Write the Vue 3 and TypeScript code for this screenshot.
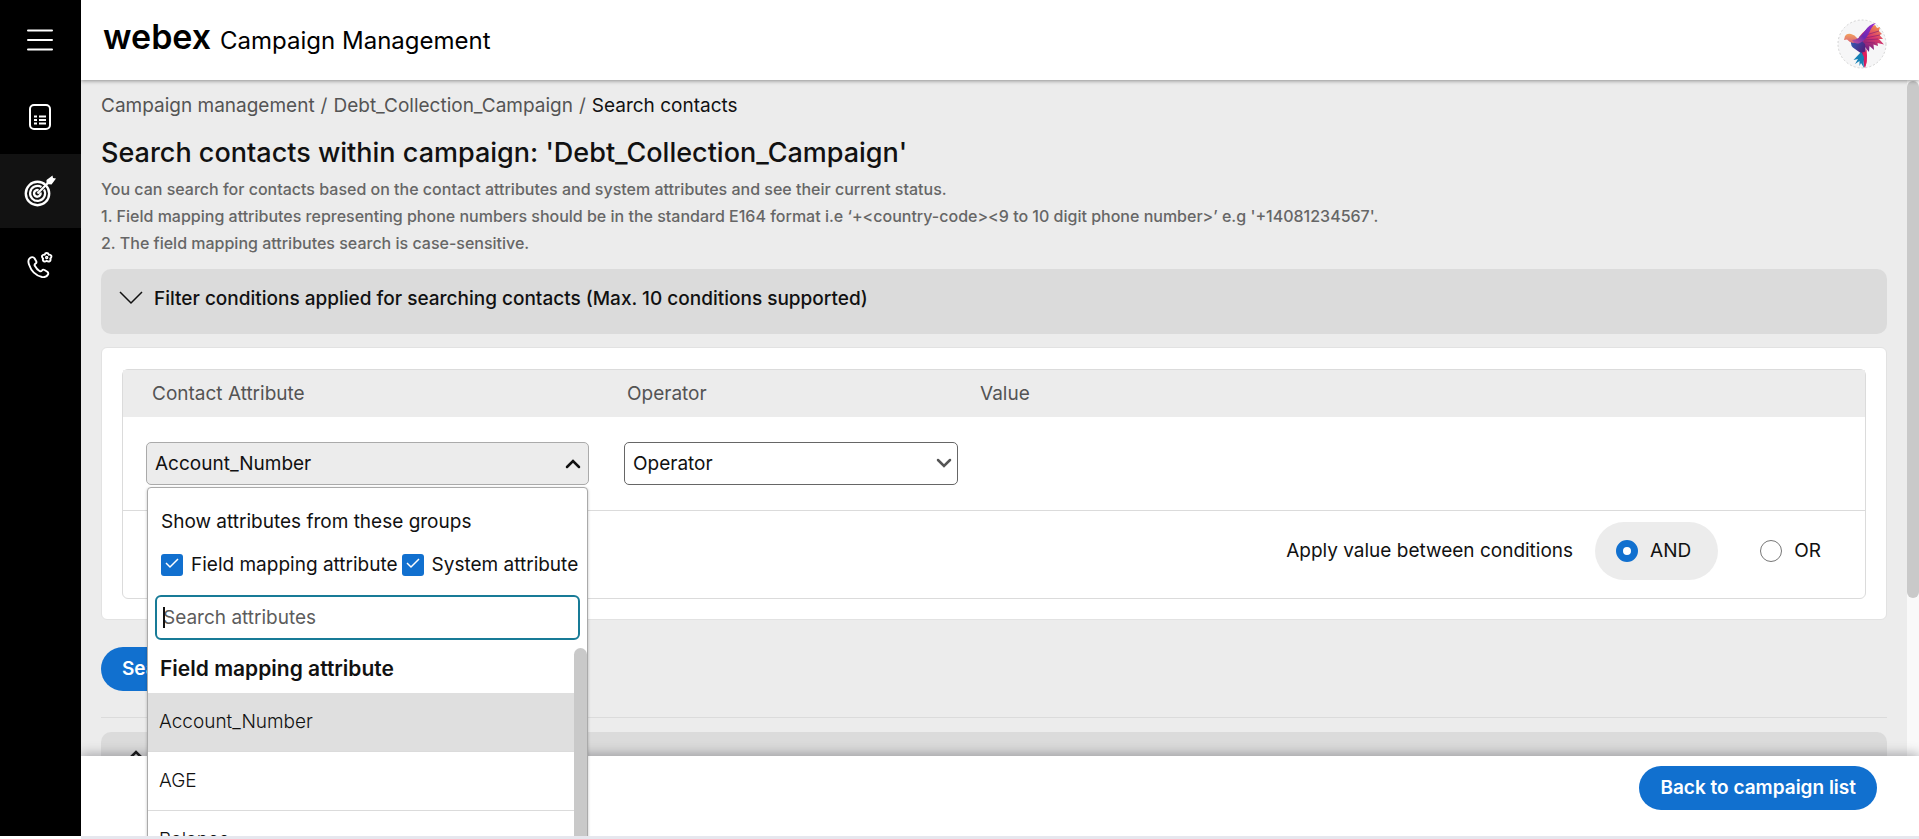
<script setup lang="ts">
import { ref, onMounted } from 'vue'

const fieldGroup = ref(true)
const systemGroup = ref(true)
const joiner = ref('AND')
const query = ref('')
const attributes = ['Account_Number', 'AGE', 'Balance']
const notes = [
  'You can search for contacts based on the contact attributes and system attributes and see their current status.',
  "1. Field mapping attributes representing phone numbers should be in the standard E164 format i.e ‘+<country-code><9 to 10 digit phone number>’ e.g '+14081234567'.",
  '2. The field mapping attributes search is case-sensitive.',
]
const searchBox = ref<HTMLInputElement | null>(null)
onMounted(() => searchBox.value?.focus())
</script>

<template>
  <div class="app">
    <nav class="rail" aria-label="Main">
      <button class="rail-item menu" aria-label="Menu">
        <svg width="26" height="22" viewBox="0 0 26 22"><path d="M1 1.5h24M1 11h24M1 20.5h24" stroke="#fff" stroke-width="2" stroke-linecap="round" /></svg>
      </button>
      <button class="rail-item" aria-label="Records">
        <svg width="24" height="26" viewBox="0 0 24 26" fill="none" stroke="#fff"><rect x="2" y="1" width="20" height="24" rx="4" stroke-width="2" /><path d="M6 12.5h3M11 12.5h7M6 16h3M11 16h7M6 19.500h3M11 19.500h7" stroke-width="1.800" /></svg>
      </button>
      <button class="rail-item active" aria-label="Campaigns">
        <svg width="32" height="32" viewBox="0 0 32 32" fill="none" stroke="#fff"><circle cx="13.500" cy="18.500" r="11.700" stroke-width="2.400" /><path d="M20 14.500a7.500 7.500 0 1 1-2.500-2.500" stroke-width="2.200" /><path d="M16.500 17.500a3.300 3.300 0 1 1-2-2.200" stroke-width="2.400" /><path d="M13.500 18.500L26 6" stroke-width="2.200" /><path d="M22.500 9V5L28.500 0.500L29 3L32 3.500L27.500 9.500Z" fill="#fff" stroke="none" /></svg>
      </button>
      <button class="rail-item" aria-label="Calls">
        <svg width="26" height="26" viewBox="0 0 26 26" fill="none" stroke="#fff" stroke-width="1.900" stroke-linejoin="round"><path d="M3 6C1.500 7 1 9.500 2 12.500C4 18.500 8.500 23.500 15 25C18 25.500 20 24.500 21 22.500C21.500 21.500 21.200 20.500 20.300 19.800L17.500 18C16.500 17.400 15.500 17.700 15 18.500C14.200 19.600 13.500 19.600 12.500 19C10.500 17.800 9 16 7.800 13.800C7.300 12.800 7.500 12.200 8.500 11.600C9.500 11 9.700 10.200 9.200 9.200L7.500 6.200C6.500 4.800 4.500 4.800 3 6Z" /><path d="M19.700 1Q21.300 1 21.700 2.700Q23.500 2.300 24.300 3.800Q24.800 5.400 23.300 6.500Q24 8.200 22.800 9.200Q21.300 10.100 19.700 8.800Q18.100 10.100 16.600 9.200Q15.400 8.200 16.100 6.500Q14.600 5.400 15.100 3.800Q15.900 2.300 17.700 2.700Q18.100 1 19.700 1Z" /><circle cx="19.700" cy="5.500" r="1" stroke-width="1.500" /></svg>
      </button>
    </nav>

    <div class="main">
      <header class="topbar">
        <div class="brand"><span class="webex">webex</span><span class="product">Campaign Management</span></div>
        <svg class="avatar" width="50" height="50" viewBox="0 0 50 50" role="img" aria-label="User profile">
          <defs>
            <linearGradient id="head" x1="0" y1="0" x2="0" y2="1"><stop offset="0" stop-color="#f2a25c" /><stop offset="1" stop-color="#d9627a" /></linearGradient>
            <linearGradient id="feathers" x1="0.800" y1="0" x2="0.300" y2="1"><stop offset="0" stop-color="#f59a4a" /><stop offset=".45" stop-color="#d9386b" /><stop offset="1" stop-color="#5a1a8c" /></linearGradient>
            <linearGradient id="wing" x1="1" y1="0" x2="0" y2="1"><stop offset="0" stop-color="#a12bd0" /><stop offset=".6" stop-color="#6a2bb0" /><stop offset="1" stop-color="#c4559a" /></linearGradient>
            <linearGradient id="belly" x1="0" y1="0" x2="1" y2="1"><stop offset="0" stop-color="#2b62b8" /><stop offset=".6" stop-color="#51207e" /><stop offset="1" stop-color="#e01e5c" /></linearGradient>
          </defs>
          <circle cx="25" cy="25" r="24" fill="#f6f6f7" stroke="#d4d4d4" stroke-dasharray="2 2" />
          <path d="M22 18Q30 8 38 6L40 9L43 8L42 12L45 15L42.500 16L46 20L42 20L47 25.500L40.500 24L41 27L36.500 25.500L37 31L32.500 27L32 33L28 28L26 32L20 27Z" fill="url(#feathers)" />
          <path d="M29 16L42 12M28 19L43 16M27 21L41 20M27 23L38 24" stroke="#8b1f73" stroke-width=".7" />
          <path d="M14 22L23 20L28 25L29 34Q31 42 27.500 49L25 35L18 30Q13 27 14 22Z" fill="url(#belly)" />
          <path d="M25.500 33Q29 34 29.500 29L30 37Q30 44 28 49Q28 42 25.500 36Z" fill="#e01e5c" />
          <path d="M24 33L27 38Q26 43 27 49L24 44L22.500 47L22.500 42L18 45L21 40L16.500 41Z" fill="#1681b6" />
          <path d="M7 21L8 17Q10 14 14 15Q18 16 20 19L22 22L16 24Q12 23 10 20.500Z" fill="url(#head)" />
          <path d="M15 21Q22 21 27 13Q32 5 39 4Q35 7 32.500 13Q29 21 23 24Q18 26 15 21Z" fill="url(#wing)" />
        </svg>
      </header>

      <main class="content">
        <nav class="crumbs" aria-label="Breadcrumb">
          <a href="#">Campaign management</a><span>/</span><a href="#">Debt_Collection_Campaign</a><span>/</span><a href="#" class="current">Search contacts</a>
        </nav>
        <h1>Search contacts within campaign: 'Debt_Collection_Campaign'</h1>
        <p v-for="note in notes" :key="note" class="note">{{ note }}</p>

        <button class="fold">
          <svg width="24" height="14" viewBox="0 0 24 14"><path d="M1 1L12 12L23 1" fill="none" stroke="#111" stroke-width="1.500" /></svg>
          Filter conditions applied for searching contacts (Max. 10 conditions supported)
        </button>

        <section class="card">
          <div class="grid">
            <div class="row head"><span>Contact Attribute</span><span>Operator</span><span>Value</span></div>
            <div class="row body">
              <div class="picker">
                <button class="combo" aria-haspopup="listbox" aria-expanded="true">
                  Account_Number
                  <svg width="16" height="10" viewBox="0 0 16 10"><path d="M2 8L8 2L14 8" fill="none" stroke="#111" stroke-width="2.500" stroke-linecap="round" /></svg>
                </button>
                <div class="popup">
                  <div class="popup-title">Show attributes from these groups</div>
                  <div class="groups">
                    <label><input v-model="fieldGroup" type="checkbox" />Field mapping attribute</label>
                    <label><input v-model="systemGroup" type="checkbox" />System attribute</label>
                  </div>
                  <div class="search-wrap">
                    <input ref="searchBox" v-model="query" class="search" type="text" placeholder="Search attributes" aria-label="Search attributes" />
                    <span v-if="!query" class="caret" aria-hidden="true"></span>
                  </div>
                  <div class="scroller">
                    <div class="list" role="listbox" aria-label="Attributes">
                      <div class="group-name">Field mapping attribute</div>
                      <div v-for="(name, i) in attributes" :key="name" class="option" :class="{ chosen: i === 0 }" role="option" :aria-selected="i === 0">{{ name }}</div>
                    </div>
                    <div class="thumb"></div>
                  </div>
                </div>
              </div>
              <div class="select-wrap">
                <select aria-label="Operator"><option>Operator</option></select>
                <svg width="16" height="10" viewBox="0 0 16 10"><path d="M2 2L8 8L14 2" fill="none" stroke="#555" stroke-width="2.500" stroke-linecap="round" /></svg>
              </div>
            </div>
            <div class="joiner">
              <span class="joiner-text">Apply value between conditions</span>
              <label :class="{ on: joiner === 'AND' }"><input v-model="joiner" type="radio" name="joiner" value="AND" />AND</label>
              <label :class="{ on: joiner === 'OR' }"><input v-model="joiner" type="radio" name="joiner" value="OR" />OR</label>
            </div>
          </div>
        </section>

        <button class="pill search-button">Search</button>
        <hr />
        <button class="fold next" aria-label="Expand results">
          <svg width="16" height="10" viewBox="0 0 16 10"><path d="M2 8L8 2L14 8" fill="none" stroke="#111" stroke-width="2.500" /></svg>
        </button>
        <div class="page-track"><div class="page-thumb"></div></div>
      </main>

      <footer><button class="pill">Back to campaign list</button></footer>
    </div>
  </div>
</template>

<style>
body { background: #fff; }
</style>

<style scoped>
* { box-sizing: border-box; }
.app { display: flex; height: 100vh; overflow: hidden; font-family: Inter, "Liberation Sans", sans-serif; font-size: 19px; line-height: 24px; color: #111; }
button, input, select { font: inherit; color: inherit; margin: 0; }
button { border: 0; cursor: pointer; }

.rail { width: 81px; flex: none; background: #000; margin-bottom: 3px; }
.rail-item { display: flex; align-items: center; justify-content: center; width: 100%; height: 74px; padding: 0 1px 0 0; background: none; }
.rail-item.menu { height: 80px; }
.rail-item.active { background: #121212; }

.main { flex: 1; min-width: 0; display: flex; flex-direction: column; overflow: hidden; border-bottom: 3px solid #e6e7ee; }
.topbar { position: relative; z-index: 2; height: 80px; flex: none; display: flex; align-items: center; justify-content: space-between; padding: 0 32px 2px 22px; background: #fff; box-shadow: 0 1px 4px rgba(0, 0, 0, .4); }
.brand { display: flex; align-items: baseline; gap: 9px; color: #000; }
.webex { font-size: 34px; font-weight: 600; }
.product { font-size: 24px; }
.avatar { margin-top: 10px; }

.content { position: relative; flex: 1; min-height: 0; padding: 14px 32px 0 20px; background: #ececec; }
.crumbs { display: flex; gap: 6px; color: #545454; }
.crumbs a { color: inherit; text-decoration: none; }
.crumbs a.current { color: #111; }
h1 { margin: 15px 0 3px; font-size: 27px; line-height: 40px; font-weight: 500; }
.note { margin: 0; font-size: 16px; line-height: 27px; font-weight: 500; color: #666; }
.fold { display: flex; align-items: flex-start; gap: 11px; width: 100%; height: 65px; margin-top: 12px; padding: 18px; border-radius: 10px; background: #dbdbdb; font-weight: 500; text-align: left; }
.fold svg { margin-top: 4px; }

.card { margin-top: 13px; padding: 21px 20px 20px; border: 1px solid #e2e2e2; border-radius: 6px; background: #fff; }
.grid { border: 1px solid #dbdbdb; border-radius: 6px; }
.row { display: grid; grid-template-columns: 443px 334px 1fr; column-gap: 35px; }
.row.head { grid-template-columns: 475px 353px 1fr; column-gap: 0; padding: 12px 29px 11px; background: #ececec; color: #545454; }
.row.body { padding: 25px 23px; border-bottom: 1px solid #dbdbdb; }
.picker { position: relative; z-index: 5; }
.combo { display: flex; align-items: center; justify-content: space-between; width: 100%; height: 43px; padding: 0 7px 0 8px; border: 1px solid #aaa; border-radius: 5px; background: #ececec; }
.popup { position: absolute; top: 45px; left: 1px; right: 1px; height: 500px; border: 1px solid #aaa; border-radius: 4px; background: #fff; box-shadow: 0 1px 3px rgba(0, 0, 0, .25); }
.popup-title { padding: 22px 13px 0; }
.groups { display: flex; gap: 4px; padding: 19px 8px 18px 13px; white-space: nowrap; }
.groups label { display: flex; align-items: center; gap: 8px; }
.groups input { appearance: none; flex: none; width: 22px; height: 22px; border-radius: 3px; background: #1170cf url("data:image/svg+xml,%3Csvg xmlns='http://www.w3.org/2000/svg' viewBox='0 0 22 22'%3E%3Cpath d='M5 9l4 4 8-8' fill='none' stroke='white' stroke-width='1.500'/%3E%3C/svg%3E"); }
.search-wrap { position: relative; margin: 0 7px; }
.search { display: block; width: 100%; height: 45px; padding: 0 6px; border: 2px solid #187b97; border-radius: 6px; outline: 0; background: #fff; caret-color: transparent; }
.search::placeholder { color: #5c5c5c; opacity: 1; }
.caret { position: absolute; left: 8px; top: 12px; width: 2px; height: 21px; background: #111; }
.scroller { display: flex; margin-top: 8px; }
.list { flex: 1; }
.group-name { padding: 9px 12px 12px; font-size: 21px; font-weight: 600; }
.option { height: 59px; padding: 17px 11px; border-bottom: 1px solid #dbdbdb; font-weight: 300; }
.option.chosen { background: #dfdfdf; }
.thumb { width: 13px; height: 300px; border-radius: 7px; background: #c9c9c9; }
.select-wrap { position: relative; }
.select-wrap select { appearance: none; width: 100%; height: 43px; padding: 0 8px; border: 1px solid #666; border-radius: 5px; background: #fff; }
.select-wrap svg { position: absolute; right: 6px; top: 16px; pointer-events: none; }

.joiner { display: flex; align-items: center; justify-content: flex-end; padding: 11px 17px 18px 0; }
.joiner-text { margin-right: 22px; }
.joiner label { display: flex; align-items: center; gap: 12px; height: 58px; padding: 0 27px 0 21px; border-radius: 29px; }
.joiner label.on { margin-right: 21px; background: #ececec; }
.joiner input { appearance: none; width: 22px; height: 22px; border: 1px solid #777; border-radius: 50%; background: #fff; }
.joiner input:checked { border: 7px solid #1170cf; }

.pill { height: 44px; padding: 0 21px; border-radius: 22px; background: #1170cf; color: #fff; font-weight: 600; }
.search-button { display: block; margin-top: 27px; }
hr { margin: 26px 0 14px; border: 0; border-top: 1px solid #dbdbdb; }
.fold.next { margin: 0; padding-left: 27px; }
.fold.next svg { margin-top: 0; }
.page-track { position: absolute; top: 0; right: 0; bottom: 0; width: 12px; background: #f9f9f9; }
.page-thumb { height: 517px; margin-top: 1px; border-radius: 6px; background: #c9c9c9; }
footer { position: relative; z-index: 2; height: 80px; flex: none; padding: 10px 42px; text-align: right; background: #fff; box-shadow: 0 -3px 10px rgba(60, 60, 70, .35); }
</style>
